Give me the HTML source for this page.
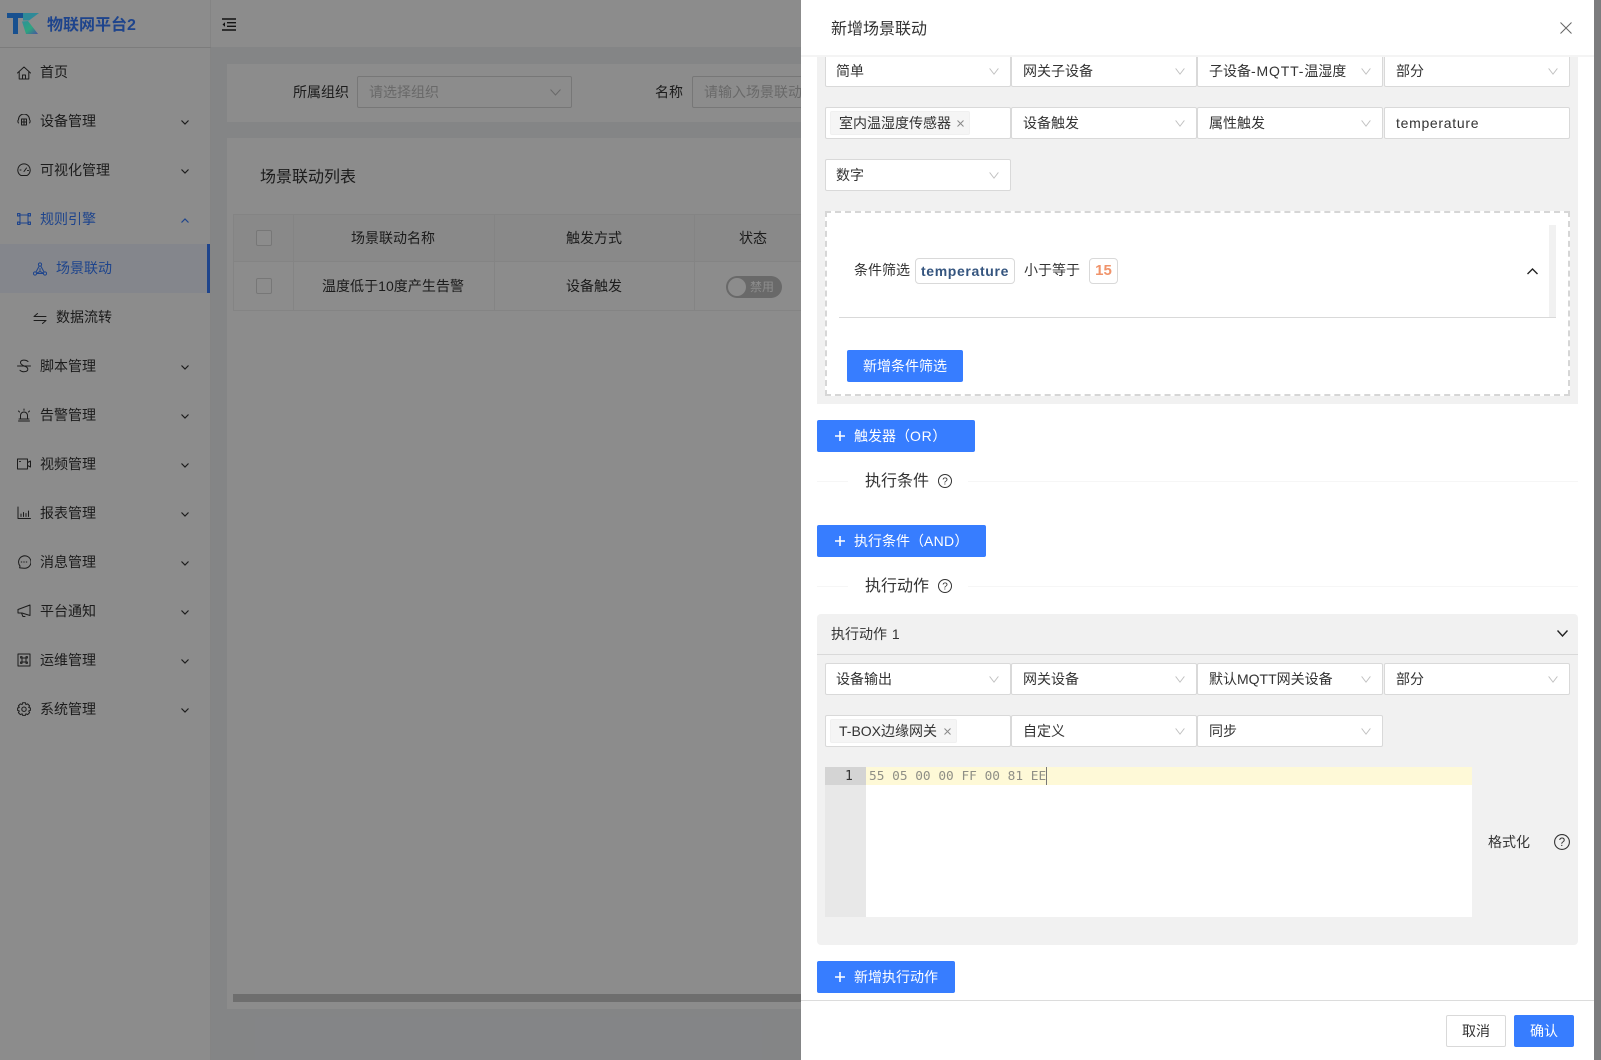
<!DOCTYPE html>
<html lang="zh"><head><meta charset="utf-8"><title>场景联动</title>
<style>
html,body{margin:0;padding:0;width:1601px;height:1060px;overflow:hidden;background:#f0f2f5}
*{box-sizing:border-box}
body{position:relative;font-family:"Liberation Sans","Noto Sans CJK SC",sans-serif;font-size:14px;color:#333}
.a{position:absolute}
.t{position:absolute;line-height:20px;white-space:nowrap}
.c{text-align:center;transform:translateX(-50%)}
.b{color:#377dff}
.ic{position:absolute;width:14px;height:14px;fill:none;stroke:#333;stroke-width:1;stroke-linecap:round;stroke-linejoin:round}
.ic.bl{stroke:#377dff}
.ch{position:absolute;left:181px;width:8px;height:5px;fill:none;stroke:#333;stroke-width:1.2}
.s{position:absolute;background:#fff;border:1px solid #d9d9d9;border-radius:2px;height:32px;line-height:30px;padding-left:11px;white-space:nowrap;color:#333;width:186px}
.s.f{padding-left:10px}
.s svg{position:absolute;right:11px;top:12px;width:10px;height:7px;fill:none;stroke:#bfbfbf;stroke-width:1}
.tag{position:absolute;background:#f5f5f5;border:1px solid #f0f0f0;border-radius:2px;height:24px;line-height:22px;padding-left:8px;white-space:nowrap;color:#333}
.x{position:absolute;top:8px;width:7px;height:7px;stroke:#888;stroke-width:1;fill:none}
.btn{position:absolute;background:#377dff;color:#fff;border-radius:2px;height:32px;line-height:32px;white-space:nowrap}
.plus{position:absolute;top:11px;left:18px;width:10px;height:10px;stroke:#fff;stroke-width:1.6;fill:none}
.ln{position:absolute;height:1px;background:#f6f6f6}
.q{position:absolute;fill:none;stroke:#333;stroke-width:1}
.q text{font-size:10px;fill:#333;stroke:none;font-family:"Liberation Sans",sans-serif}
.ls{letter-spacing:.7px}
</style></head><body>

<!-- base page -->
<div class="a" style="left:0;top:0;width:211px;height:1060px;background:#fff;border-right:1px solid #f0f0f0"></div>
<div class="a" style="left:0;top:47px;width:211px;height:1px;background:#e2e2e2"></div>
<div class="a" style="left:211px;top:0;width:600px;height:47px;background:#fff"></div>

<svg class="a" style="left:222px;top:18px;width:15px;height:13px;fill:none;stroke:#222;stroke-width:1.4" viewBox="0 0 15 13"><path d="M0 1H14M5 4.7H14M5 8.3H14M0 12H14"/><path d="M3 4.2V8.8L0.5 6.5Z" fill="#222" stroke="none"/></svg>

<div class="t" style="left:47px;top:16px;font-size:16px;font-weight:bold;color:#377dff">物联网平台2</div>

<!-- menu -->
<div class="a" style="left:0;top:244px;width:210px;height:49px;background:#f1f5ff;border-right:3px solid #377dff"></div>
<div class="t" style="left:40px;top:62px">首页</div>
<div class="t" style="left:40px;top:111px">设备管理</div>
<div class="t" style="left:40px;top:160px">可视化管理</div>
<div class="t b" style="left:40px;top:209px">规则引擎</div>
<div class="t b" style="left:56px;top:258px">场景联动</div>
<div class="t" style="left:56px;top:307px">数据流转</div>
<div class="t" style="left:40px;top:356px">脚本管理</div>
<div class="t" style="left:40px;top:405px">告警管理</div>
<div class="t" style="left:40px;top:454px">视频管理</div>
<div class="t" style="left:40px;top:503px">报表管理</div>
<div class="t" style="left:40px;top:552px">消息管理</div>
<div class="t" style="left:40px;top:601px">平台通知</div>
<div class="t" style="left:40px;top:650px">运维管理</div>
<div class="t" style="left:40px;top:699px">系统管理</div>

<!-- icons -->
<svg class="ic" style="left:17px;top:66px" viewBox="0 0 14 14"><path d="M0.5 7L7 1L13.5 7M2.2 6V13H11.8V6M5.5 13V9H8.5V13"/></svg>
<svg class="ic" style="left:17px;top:114px" viewBox="0 0 14 14"><path d="M1.5 9A3 3 0 0 1 1.5 5.5A5.5 5.5 0 0 1 12.5 5.5A3 3 0 0 1 12.5 9"/><path d="M4.5 5H9.5V11H4.5ZM4.5 8H9.5M7 5V11"/></svg>
<svg class="ic" style="left:17px;top:163px" viewBox="0 0 14 14"><path d="M4 12.5A6.2 6.2 0 1 1 10 12.5ZM7 8.5L9.5 5M3 7H4M10.5 7.5H11.5"/></svg>
<svg class="ic bl" style="left:17px;top:212px" viewBox="0 0 14 14"><path d="M2 3H12M2 11H12M3 3V11M11 3V11"/><path d="M0.5 1.5H3V4H0.5ZM11 1.5H13.5V4H11ZM0.5 10H3V12.5H0.5ZM11 10H13.5V12.5H11Z"/></svg>
<svg class="ic bl" style="left:33px;top:262px" viewBox="0 0 14 14"><circle cx="7" cy="2.5" r="1.6"/><circle cx="2" cy="11.5" r="1.6"/><circle cx="12" cy="11.5" r="1.6"/><path d="M6.2 4L3 10M7.8 4L11 10M3.6 11.5H10.4M7 6.5V9.5L4 11M7 9.5L10 11"/></svg>
<svg class="ic" style="left:33px;top:311px" viewBox="0 0 14 14"><path d="M1 5.5H13M1 5.5L4.5 2.5M1 9.5H13M13 9.5L9.5 12.5"/></svg>
<svg class="ic" style="left:17px;top:359px" viewBox="0 0 14 14"><path d="M0.5 7H13.5M11 2.5C9 0.5 3.5 0.5 3.5 3.5C3.5 5.5 6 6.2 7 7C9 7.5 10.8 8.3 10.8 10.2C10.8 13 5 13.5 3 11.3"/></svg>
<svg class="ic" style="left:17px;top:408px" viewBox="0 0 14 14"><path d="M3.5 11V7.5A3.5 3.5 0 0 1 10.5 7.5V11M1.5 13H12.5M2 11H12M7 1V2.2M1.5 3L2.5 4M12.5 3L11.5 4"/></svg>
<svg class="ic" style="left:17px;top:457px" viewBox="0 0 14 14"><path d="M0.5 2H10.5V12H0.5ZM10.5 5.5L13.5 4V10L10.5 8.5M2.5 4.5H3.5"/></svg>
<svg class="ic" style="left:17px;top:506px" viewBox="0 0 14 14"><path d="M1 1V12.5H13.5M4 10.5V8M6.5 10.5V6.5M9 10.5V7.5M11.5 10.5V5"/></svg>
<svg class="ic" style="left:17px;top:555px" viewBox="0 0 14 14"><path d="M2.6 12.8L3 11A6.2 6.2 0 1 1 7 13.2C5.5 13.2 4 12.9 2.6 12.8Z"/><path d="M4.2 7H4.8M6.7 7H7.3M9.2 7H9.8"/></svg>
<svg class="ic" style="left:17px;top:604px" viewBox="0 0 14 14"><path d="M13 1V11.5L5 9H1V5.5L13 1ZM4.5 9.2L6 12.5H8"/></svg>
<svg class="ic" style="left:17px;top:653px" viewBox="0 0 14 14"><path d="M1 1H13V13H1Z"/><path d="M5 5H9V9H5ZM5 5H3.6V3.6H5V5ZM9 5V3.6H10.4V5ZM9 9H10.4V10.4H9ZM5 9V10.4H3.6V9Z"/></svg>
<svg class="ic" style="left:17px;top:702px" viewBox="0 0 14 14"><path d="M5.6 0.8H8.4L8.9 2.6L10.6 1.9L12.6 3.9L11.7 5.5L13.4 6V8.4L11.7 9L12.6 10.6L10.6 12.6L8.9 11.8L8.4 13.4H5.6L5.1 11.8L3.4 12.6L1.4 10.6L2.3 9L0.6 8.4V6L2.3 5.5L1.4 3.9L3.4 1.9L5.1 2.6Z"/><circle cx="7" cy="7.2" r="2.2"/></svg>

<!-- chevrons -->
<svg class="ch" style="top:120px" viewBox="0 0 8 5"><path d="M0.5 0.5L4 4L7.5 0.5"/></svg>
<svg class="ch" style="top:169px" viewBox="0 0 8 5"><path d="M0.5 0.5L4 4L7.5 0.5"/></svg>
<svg class="ch" style="top:218px;stroke:#377dff" viewBox="0 0 8 5"><path d="M0.5 4.5L4 1L7.5 4.5"/></svg>
<svg class="ch" style="top:365px" viewBox="0 0 8 5"><path d="M0.5 0.5L4 4L7.5 0.5"/></svg>
<svg class="ch" style="top:414px" viewBox="0 0 8 5"><path d="M0.5 0.5L4 4L7.5 0.5"/></svg>
<svg class="ch" style="top:463px" viewBox="0 0 8 5"><path d="M0.5 0.5L4 4L7.5 0.5"/></svg>
<svg class="ch" style="top:512px" viewBox="0 0 8 5"><path d="M0.5 0.5L4 4L7.5 0.5"/></svg>
<svg class="ch" style="top:561px" viewBox="0 0 8 5"><path d="M0.5 0.5L4 4L7.5 0.5"/></svg>
<svg class="ch" style="top:610px" viewBox="0 0 8 5"><path d="M0.5 0.5L4 4L7.5 0.5"/></svg>
<svg class="ch" style="top:659px" viewBox="0 0 8 5"><path d="M0.5 0.5L4 4L7.5 0.5"/></svg>
<svg class="ch" style="top:708px" viewBox="0 0 8 5"><path d="M0.5 0.5L4 4L7.5 0.5"/></svg>

<!-- search card -->
<div class="a" style="left:227px;top:64px;width:600px;height:58px;background:#fff"></div>
<div class="t" style="left:293px;top:82px">所属组织</div>
<div class="a" style="left:357px;top:76px;width:215px;height:32px;border:1px solid #d9d9d9;border-radius:2px;line-height:30px;padding-left:11px;color:#bfbfbf;background:#fff">请选择组织</div>
<svg class="a" style="left:550px;top:89px;width:11px;height:7px;fill:none;stroke:#bfbfbf" viewBox="0 0 11 7"><path d="M0.5 0.5L5.5 6L10.5 0.5"/></svg>
<div class="t" style="left:655px;top:82px">名称</div>
<div class="a" style="left:692px;top:76px;width:260px;height:32px;border:1px solid #d9d9d9;border-radius:2px;line-height:30px;padding-left:11px;color:#bfbfbf;background:#fff;white-space:nowrap">请输入场景联动名称</div>

<!-- table card -->
<div class="a" style="left:227px;top:138px;width:600px;height:871px;background:#fff"></div>
<div class="t" style="left:260px;top:168px;font-size:16px">场景联动列表</div>
<div class="a" style="left:233px;top:214px;width:600px;height:48px;background:#fafafa;border-top:1px solid #f0f0f0;border-left:1px solid #f0f0f0;border-bottom:1px solid #f0f0f0"></div>
<div class="a" style="left:233px;top:262px;width:600px;height:49px;border-left:1px solid #f0f0f0;border-bottom:1px solid #f0f0f0"></div>
<div class="a" style="left:293px;top:214px;width:1px;height:97px;background:#f0f0f0"></div>
<div class="a" style="left:494px;top:214px;width:1px;height:97px;background:#f0f0f0"></div>
<div class="a" style="left:694px;top:214px;width:1px;height:97px;background:#f0f0f0"></div>
<div class="a" style="left:256px;top:230px;width:16px;height:16px;border:1px solid #d9d9d9;border-radius:2px;background:#fff"></div>
<div class="a" style="left:256px;top:278px;width:16px;height:16px;border:1px solid #d9d9d9;border-radius:2px;background:#fff"></div>
<div class="t c" style="left:393px;top:228px">场景联动名称</div>
<div class="t c" style="left:594px;top:228px">触发方式</div>
<div class="t c" style="left:753px;top:228px">状态</div>
<div class="t c" style="left:393px;top:276px;letter-spacing:.05px">温度低于10度产生告警</div>
<div class="t c" style="left:594px;top:276px">设备触发</div>
<div class="a" style="left:726px;top:276px;width:56px;height:22px;border-radius:11px;background:#bfbfbf"></div>
<div class="a" style="left:728px;top:278px;width:18px;height:18px;border-radius:50%;background:#fff"></div>
<div class="t" style="left:750px;top:277px;font-size:12px;color:#fff">禁用</div>
<div class="a" style="left:233px;top:994px;width:600px;height:8px;background:#c9c9c9"></div>

<!-- mask -->
<div class="a" style="left:0;top:0;width:1601px;height:1060px;background:rgba(0,0,0,.45)"></div>

<!-- logo over the mask -->
<svg class="a" style="left:7px;top:13px;width:32px;height:22px" viewBox="0 0 32 22">
<defs><linearGradient id="k" x1="0" y1="0" x2="1" y2="1"><stop offset="0" stop-color="#2f8f9a"/><stop offset=".55" stop-color="#2ea57f"/><stop offset="1" stop-color="#4a4fa0"/></linearGradient></defs>
<path d="M0 0H16.5V5H11V21H6V5H0Z" fill="#17508f"/>
<path d="M16 0H32L22 7.5H16Z" fill="#2f8a98"/>
<path d="M15 8.5L21 8L31 21H19Z" fill="url(#k)"/>
</svg>

<div class="a" style="left:1594px;top:0;width:7px;height:1060px;background:#7c7c7e"></div>

<!-- drawer -->
<div class="a" style="left:801px;top:0;width:793px;height:1060px;background:#fff"></div>
<div class="t" style="left:831px;top:20px;font-size:16px">新增场景联动</div>
<svg class="a" style="left:1560px;top:22px;width:12px;height:12px;fill:none;stroke:#666;stroke-width:1" viewBox="0 0 12 12"><path d="M0.5 0.5L11.5 11.5M11.5 0.5L0.5 11.5"/></svg>

<!-- trigger panel -->
<div class="a" style="left:817px;top:56px;width:761px;height:348px;background:#f1f1f1"></div>

<div class="s f" style="left:825px;top:55px">简单<svg viewBox="0 0 11 8"><path d="M0.5 0.5L5.5 7L10.5 0.5"/></svg></div>
<div class="s" style="left:1011px;top:55px">网关子设备<svg viewBox="0 0 11 8"><path d="M0.5 0.5L5.5 7L10.5 0.5"/></svg></div>
<div class="s" style="left:1197px;top:55px">子设备<span style="letter-spacing:.85px">-MQTT-</span>温湿度<svg viewBox="0 0 11 8"><path d="M0.5 0.5L5.5 7L10.5 0.5"/></svg></div>
<div class="s" style="left:1384px;top:55px">部分<svg viewBox="0 0 11 8"><path d="M0.5 0.5L5.5 7L10.5 0.5"/></svg></div>
<div class="a" style="left:801px;top:55px;width:793px;height:2px;background:#f4f4f4"></div>

<div class="s f" style="left:825px;top:107px"></div>
<div class="tag" style="left:830px;top:111px;width:140px">室内温湿度传感器<svg class="x" style="left:126px" viewBox="0 0 7 7"><path d="M0.5 0.5L6.5 6.5M6.5 0.5L0.5 6.5"/></svg></div>
<div class="s" style="left:1011px;top:107px">设备触发<svg viewBox="0 0 11 8"><path d="M0.5 0.5L5.5 7L10.5 0.5"/></svg></div>
<div class="s" style="left:1197px;top:107px">属性触发<svg viewBox="0 0 11 8"><path d="M0.5 0.5L5.5 7L10.5 0.5"/></svg></div>
<div class="s ls" style="left:1384px;top:107px">temperature</div>
<div class="s f" style="left:825px;top:159px">数字<svg viewBox="0 0 11 8"><path d="M0.5 0.5L5.5 7L10.5 0.5"/></svg></div>

<!-- dashed filter box -->
<div class="a" style="left:825px;top:211px;width:745px;height:185px;background:#fff;border:2px dashed #d6d6d6"></div>
<div class="a" style="left:1549px;top:225px;width:7px;height:93px;background:#f1f1f1"></div>
<div class="a" style="left:839px;top:317px;width:717px;height:1px;background:#d9d9d9"></div>
<div class="t" style="left:854px;top:260px">条件筛选</div>
<div class="a" style="left:915px;top:258px;width:100px;height:26px;border:1px solid #d9d9d9;border-radius:4px;background:#fff;text-align:center;line-height:24px;font-weight:bold;color:#35557f;letter-spacing:.65px">temperature</div>
<div class="t" style="left:1024px;top:260px">小于等于</div>
<div class="a" style="left:1089px;top:258px;width:29px;height:26px;border:1px solid #d9d9d9;border-radius:4px;background:#fff;text-align:center;line-height:24px;font-weight:bold;font-size:15px;color:#f0936a">15</div>
<svg class="a" style="left:1527px;top:268px;width:11px;height:7px;fill:none;stroke:#222;stroke-width:1.4" viewBox="0 0 11 7"><path d="M0.5 6L5.5 1L10.5 6"/></svg>
<div class="btn" style="left:847px;top:350px;width:116px;text-align:center">新增条件筛选</div>

<!-- trigger button -->
<div class="btn" style="left:817px;top:420px;width:158px;padding-left:37px">触发器（<span style="letter-spacing:.7px">OR</span>）<svg class="plus" viewBox="0 0 10 10"><path d="M5 0V10M0 5H10"/></svg></div>

<!-- divider 执行条件 -->
<div class="ln" style="left:817px;top:481px;width:31px"></div>
<div class="ln" style="left:968px;top:481px;width:610px"></div>
<div class="t" style="left:865px;top:472px;font-size:16px">执行条件</div>
<svg class="q" style="left:938px;top:474px;width:14px;height:14px" viewBox="0 0 14 14"><circle cx="7" cy="7" r="6.5"/><text x="4.3" y="10.5">?</text></svg>

<div class="btn" style="left:817px;top:525px;width:169px;padding-left:37px">执行条件（<span style="letter-spacing:.3px">AND</span>）<svg class="plus" viewBox="0 0 10 10"><path d="M5 0V10M0 5H10"/></svg></div>

<!-- divider 执行动作 -->
<div class="ln" style="left:817px;top:586px;width:31px"></div>
<div class="ln" style="left:968px;top:586px;width:610px"></div>
<div class="t" style="left:865px;top:577px;font-size:16px">执行动作</div>
<svg class="q" style="left:938px;top:579px;width:14px;height:14px" viewBox="0 0 14 14"><circle cx="7" cy="7" r="6.5"/><text x="4.3" y="10.5">?</text></svg>

<!-- action panel -->
<div class="a" style="left:817px;top:614px;width:761px;height:331px;background:#f1f1f1;border-radius:4px"></div>
<div class="a" style="left:817px;top:654px;width:761px;height:1px;background:#d9d9d9"></div>
<div class="t" style="left:831px;top:624px;word-spacing:1px">执行动作 1</div>
<svg class="a" style="left:1557px;top:630px;width:11px;height:7px;fill:none;stroke:#222;stroke-width:1.4" viewBox="0 0 11 7"><path d="M0.5 0.5L5.5 6L10.5 0.5"/></svg>

<div class="s f" style="left:825px;top:663px">设备输出<svg viewBox="0 0 11 8"><path d="M0.5 0.5L5.5 7L10.5 0.5"/></svg></div>
<div class="s" style="left:1011px;top:663px">网关设备<svg viewBox="0 0 11 8"><path d="M0.5 0.5L5.5 7L10.5 0.5"/></svg></div>
<div class="s" style="left:1197px;top:663px">默认MQTT网关设备<svg viewBox="0 0 11 8"><path d="M0.5 0.5L5.5 7L10.5 0.5"/></svg></div>
<div class="s" style="left:1384px;top:663px">部分<svg viewBox="0 0 11 8"><path d="M0.5 0.5L5.5 7L10.5 0.5"/></svg></div>

<div class="s f" style="left:825px;top:715px"></div>
<div class="tag" style="left:830px;top:719px;width:127px">T-BOX边缘网关<svg class="x" style="left:113px" viewBox="0 0 7 7"><path d="M0.5 0.5L6.5 6.5M6.5 0.5L0.5 6.5"/></svg></div>
<div class="s" style="left:1011px;top:715px">自定义<svg viewBox="0 0 11 8"><path d="M0.5 0.5L5.5 7L10.5 0.5"/></svg></div>
<div class="s" style="left:1197px;top:715px">同步<svg viewBox="0 0 11 8"><path d="M0.5 0.5L5.5 7L10.5 0.5"/></svg></div>

<!-- editor -->
<div class="a" style="left:825px;top:767px;width:41px;height:150px;background:#e8e8e8"></div>
<div class="a" style="left:825px;top:767px;width:41px;height:18px;background:#d4d4d4"></div>
<div class="a" style="left:866px;top:767px;width:606px;height:150px;background:#fff"></div>
<div class="a" style="left:866px;top:767px;width:606px;height:18px;background:#fef9d7"></div>
<div class="a" style="left:845px;top:768px;font-family:'DejaVu Sans Mono',monospace;font-size:13px;line-height:18px;color:#333">1</div>
<div class="a" style="left:869px;top:768px;font-family:'DejaVu Sans Mono',monospace;font-size:12.8px;line-height:18px;color:#8f8f86;white-space:pre">55 05 00 00 FF 00 81 EE</div>
<div class="a" style="left:1046px;top:767px;width:1px;height:18px;background:#777"></div>

<div class="t" style="left:1488px;top:832px">格式化</div>
<svg class="q" style="left:1554px;top:834px;width:16px;height:16px;stroke-width:1.1" viewBox="0 0 16 16"><circle cx="8" cy="8" r="7.4"/><text x="4.8" y="12" style="font-size:11.5px">?</text></svg>

<!-- add action -->
<div class="btn" style="left:817px;top:961px;width:138px;padding-left:37px">新增执行动作<svg class="plus" viewBox="0 0 10 10"><path d="M5 0V10M0 5H10"/></svg></div>

<!-- footer -->
<div class="a" style="left:801px;top:1000px;width:793px;height:1px;background:#dcdcdc"></div>
<div class="a" style="left:1446px;top:1015px;width:60px;height:32px;border:1px solid #d9d9d9;border-radius:2px;background:#fff;text-align:center;line-height:30px">取消</div>
<div class="btn" style="left:1514px;top:1015px;width:60px;text-align:center">确认</div>

</body></html>
